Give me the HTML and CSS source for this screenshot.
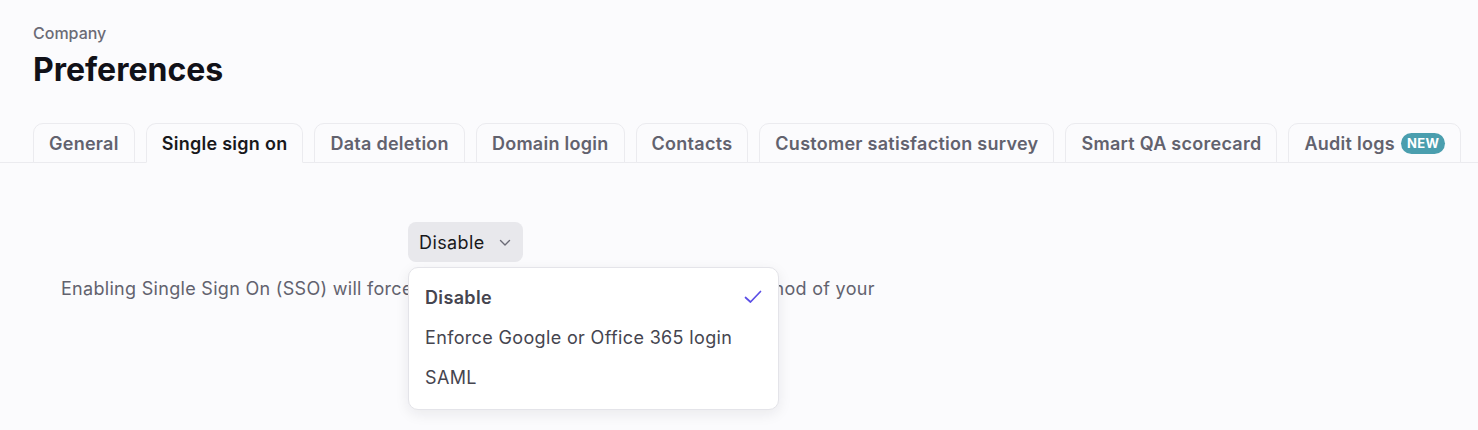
FILE: index.html
```html
<!DOCTYPE html>
<html>
<head>
<meta charset="utf-8">
<link rel="stylesheet" href="styles.css">
</head>
<body>
<header class="header">
  <div class="crumb">Company</div>
  <h1 class="title">Preferences</h1>
</header>
<nav class="tabs">
  <div class="tab">General</div>
  <div class="tab active">Single sign on</div>
  <div class="tab">Data deletion</div>
  <div class="tab">Domain login</div>
  <div class="tab">Contacts</div>
  <div class="tab">Customer satisfaction survey</div>
  <div class="tab">Smart QA scorecard</div>
  <div class="tab">Audit logs <span class="badge">NEW</span></div>
</nav>
<main class="content">
  <div class="select-row">
    <div class="select-wrap">
      <button class="select">Disable
        <svg class="chev" width="12" height="8" viewBox="0 0 12 8"><path d="M1.5 1.5 L6 6 L10.5 1.5" fill="none" stroke="#6b6b76" stroke-width="1.4" stroke-linecap="round" stroke-linejoin="round"/></svg>
      </button>
      <ul class="menu">
        <li class="item selected"><span>Disable</span>
          <svg width="18" height="14" viewBox="0 0 18 14"><path d="M1.5 7.5 L6.5 12 L16.5 1.5" fill="none" stroke="#5b4ee6" stroke-width="1.7" stroke-linecap="round" stroke-linejoin="round"/></svg>
        </li>
        <li class="item">Enforce Google or Office 365 login</li>
        <li class="item">SAML</li>
      </ul>
    </div>
  </div>
  <p class="desc">Enabling Single Sign On (SSO) will force all users to use the designated login method of your</p>
</main>
</body>
</html>
```
FILE: styles.css
```css
* { box-sizing: border-box; }
html, body { margin: 0; background: #fbfbfd; }
body {
  font-family: Inter, "Noto Sans", sans-serif;
  color: #18181b;
  width: 1478px;
  height: 430px;
  overflow: hidden;
}
.header { padding: 22px 33px 0; }
.crumb {
  font-size: 16px;
  line-height: 22px;
  font-weight: 500;
  color: #6b6b76;
}
.title {
  margin: 6px 0 0;
  font-size: 32px;
  line-height: 40px;
  font-weight: 700;
  color: #111118;
}
.tabs {
  display: flex;
  gap: 11px;
  padding: 0 33px;
  margin-top: 33px;
  border-bottom: 1px solid #ebebef;
}
.tab {
  display: flex;
  align-items: center;
  gap: 6px;
  height: 40px;
  padding: 0 15px;
  margin-bottom: -1px;
  border: 1px solid #ebebef;
  border-radius: 10px 10px 0 0;
  font-size: 18px;
  font-weight: 600;
  letter-spacing: 0.27px;
  color: #62626e;
  background: #fbfbfd;
  white-space: nowrap;
}
.tab.active {
  color: #18181b;
  border-bottom-color: #fbfbfd;
}
.badge {
  display: inline-flex;
  align-items: center;
  height: 21px;
  padding: 0 6px;
  border-radius: 11px;
  background: #4a9eae;
  color: #fff;
  font-size: 13px;
  font-weight: 700;
  letter-spacing: 0.4px;
}
.content { padding: 59px 61px 0; }
.select-row { padding-left: 347px; height: 40px; }
.select-wrap { position: relative; display: inline-block; }
.select {
  display: flex;
  align-items: center;
  gap: 14px;
  height: 40px;
  padding: 0 12px 0 11px;
  border: 0;
  border-radius: 8px;
  background: #e8e8ec;
  font-family: inherit;
  font-size: 18px;
  letter-spacing: 0.4px;
  color: #18181b;
}
.chev { margin-top: 1px; }
.menu {
  position: absolute;
  left: 0;
  top: 45px;
  width: 371px;
  margin: 0;
  padding: 9px 0 12px;
  list-style: none;
  background: #fff;
  border: 1px solid #e4e4e9;
  border-radius: 10px;
  box-shadow: 0 4px 14px rgba(20, 20, 40, 0.08);
  z-index: 2;
}
.item {
  display: flex;
  align-items: center;
  justify-content: space-between;
  height: 40px;
  padding: 0 16px;
  font-size: 18px;
  letter-spacing: 0.35px;
  color: #45454f;
}
.item.selected { font-weight: 600; }
.desc {
  margin: 14px 0 0;
  font-size: 18px;
  line-height: 26px;
  letter-spacing: 0.3px;
  color: #62626e;
}
```
